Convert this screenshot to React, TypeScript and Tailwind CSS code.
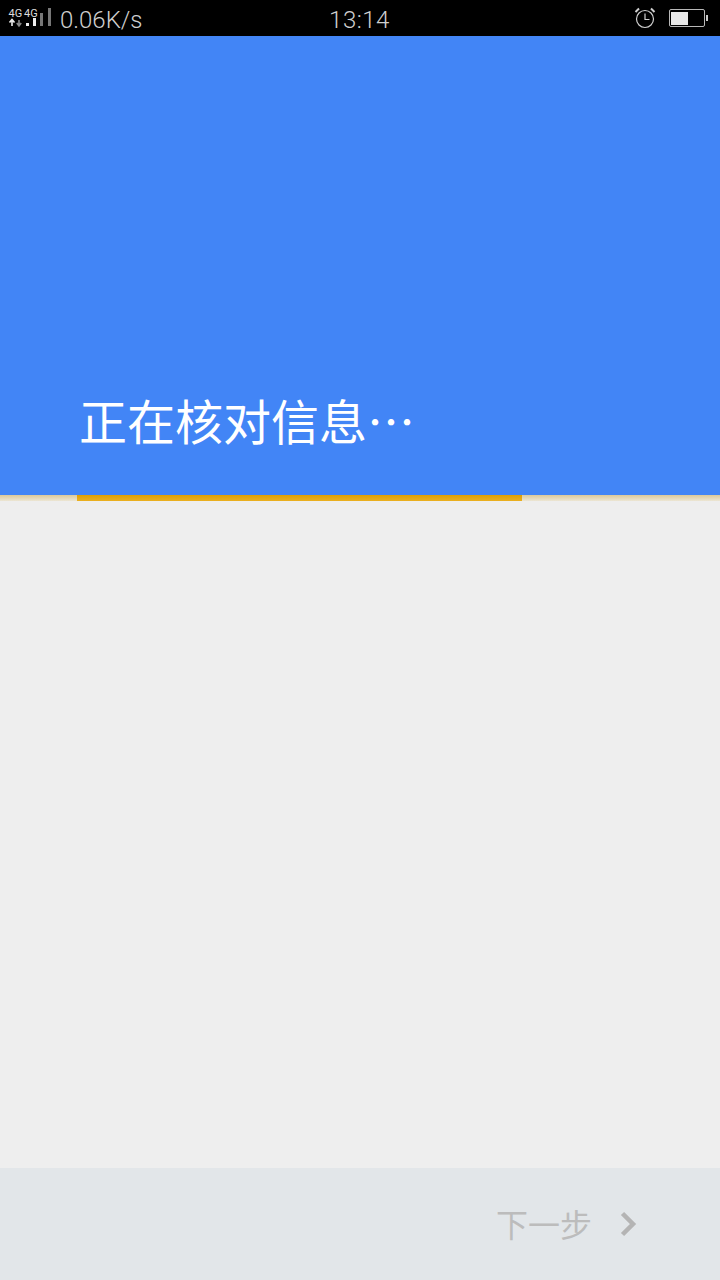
export default function App() {
  return (
    <div className="flex h-[1280px] w-[720px] flex-col overflow-hidden bg-[#eeeeee] font-['Roboto','Noto_Sans_CJK_SC',sans-serif]">
      {/* status bar */}
      <div className="flex h-9 items-center justify-between bg-black pl-2 pr-3 text-[#cfcfcf]">
        <div className="flex w-[250px] items-center gap-[8px]">
          <svg width="44" height="20" viewBox="0 0 44 20" className="shrink-0">
            <text x="0.5" y="8.5" fontSize="11" fill="#dcdcdc" fontFamily="Roboto">4G</text>
            <text x="16" y="8.5" fontSize="11" fill="#dcdcdc" fontFamily="Roboto">4G</text>
            <path d="M4 18v-5M1.5 14.5 4 11.5l2.5 3" stroke="#eeeeee" strokeWidth="1.6" fill="none" />
            <path d="M11 12v5M8.8 15 11 18l2.2-3" stroke="#8a8a8a" strokeWidth="1.6" fill="none" />
            <rect x="18" y="15" width="3" height="3" fill="#eeeeee" />
            <rect x="25" y="10" width="3" height="8" fill="#eeeeee" />
            <rect x="32" y="5" width="3" height="13" fill="#777777" />
            <rect x="40" y="0" width="3" height="18" fill="#777777" />
          </svg>
          <span className="mt-[3px] text-[24px] font-light leading-none">0.06K/s</span>
        </div>
        <span className="ml-[3px] mt-[3px] text-[24px] font-light leading-none tracking-[0.5px]">13:14</span>
        <div className="flex w-[250px] items-center justify-end gap-[13px]">
          <svg width="22" height="22" viewBox="0 0 22 22" fill="none" stroke="#d0d0d0" strokeWidth="1.2">
            <circle cx="11" cy="12" r="8.5" />
            <path d="M11 6.5V12.5H15.5" />
            <path d="M1.5 5 5 1.5M20.5 5 17 1.5" strokeWidth="2" />
          </svg>
          <div className="flex items-center gap-[1px]">
            <div className="h-[18px] w-[36px] rounded-[2px] border border-[#b8b8b8] p-[1.5px]">
              <div className="h-full w-[17px] bg-[#e8e8e8]" />
            </div>
            <div className="h-[6px] w-[2px] bg-[#c8c8c8]" />
          </div>
        </div>
      </div>

      {/* header */}
      <div className="flex h-[459px] items-end bg-[#4285f6] pb-[52px] pl-[79px]">
        <h1 className="font-['Noto_Sans_CJK_SC',sans-serif] text-[48px] font-normal leading-none text-white" lang="zh-CN">正在核对信息⋯</h1>
      </div>

      {/* progress */}
      <div className="flex h-[6px] bg-linear-to-b from-[#dcc99a] to-[#ece6d4]">
        <div className="ml-[77px] h-full w-[445px] bg-linear-to-b from-[#e09f00] to-[#eab020]" />
      </div>

      <div className="flex-1" />

      {/* footer */}
      <div className="flex h-[112px] items-center justify-end bg-[#e2e6e9] pr-[82px] text-[#bcbcbc]">
        <span className="-mt-[2px] font-['Noto_Sans_CJK_SC',sans-serif] text-[32px] font-normal leading-none" lang="zh-CN">下一步</span>
        <svg width="18" height="26" viewBox="0 0 18 26" className="ml-[28px]" fill="none" stroke="#b4b4b4" strokeWidth="4.5">
          <path d="M2.5 2.5 13 13 2.5 23.5" />
        </svg>
      </div>
    </div>
  );
}
